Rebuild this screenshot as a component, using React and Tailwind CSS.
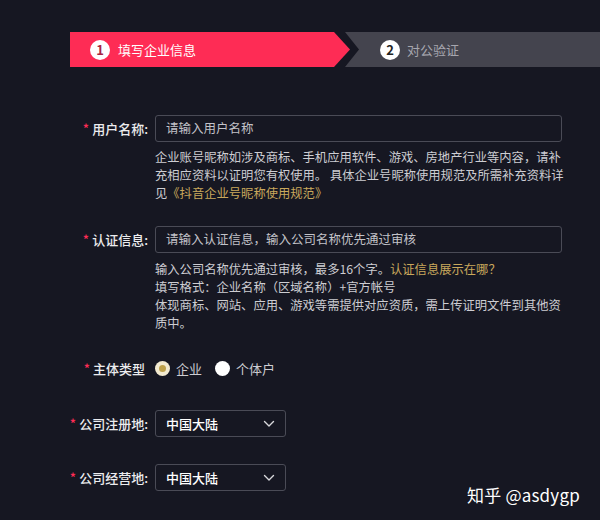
const font = { fontFamily: '"Noto Sans CJK SC", "Noto Sans", sans-serif' };

// Required-field label, right aligned into the label column
const Label = ({ children }) => (
  <div className="w-[148px] shrink-0 h-[27px] flex items-center justify-end text-[13px] text-[#ececee] font-medium">
    <span className="text-[#fe2c55] text-[13px] mr-[3px]">*</span>
    {children}
  </div>
);

const Chevron = () => (
  <svg width="12" height="8" viewBox="0 0 12 8" fill="none">
    <path d="M1.5 1.5 L6 6 L10.5 1.5" stroke="#d8d8dc" strokeWidth="1.4" strokeLinecap="round" strokeLinejoin="round" />
  </svg>
);

const Select = ({ value }) => (
  <div className="w-[131px] h-[27px] border border-[#4a4b56] rounded-[3px] flex items-center justify-between pl-[10px] pr-[10px]">
    <span className="text-[13px] text-white font-medium">{value}</span>
    <Chevron />
  </div>
);

export default function App() {
  return (
    <div className="relative w-full h-[520px] overflow-hidden bg-[#161722]" style={font}>
      {/* steps */}
      <div className="pt-[32px] pl-[70px] flex h-[67px]">
        <div className="w-[262px] h-[35px] bg-[#fe2c55] flex items-center pl-[20px] gap-[8px]">
          <span className="w-[20px] h-[20px] rounded-full bg-white flex items-center justify-center text-[13px] font-bold text-[#a82444]">1</span>
          <span className="text-[13px] text-white">填写企业信息</span>
        </div>
        <svg width="28" height="35" viewBox="0 0 28 35" className="shrink-0 block">
          <rect x="0" y="0" width="28" height="35" fill="#44444e" />
          <polygon points="0,0 13,0 27,17.5 13,35 0,35" fill="#161722" />
          <polygon points="0,0 2,0 18,17.5 2,35 0,35" fill="#fe2c55" />
        </svg>
        <div className="flex-1 h-[35px] bg-[#44444e] flex items-center pl-[20px] gap-[7px]">
          <span className="w-[20px] h-[20px] rounded-full bg-white flex items-center justify-center text-[13px] font-bold text-[#222]">2</span>
          <span className="text-[13px] text-[#a6a6ae]">对公验证</span>
        </div>
      </div>

      <div className="pt-[48px] flex flex-col">
        {/* username */}
        <div className="flex gap-[7px]">
          <Label>用户名称:</Label>
          <div className="flex flex-col">
            <div className="w-[407px] h-[27px] border border-[#4a4b56] rounded-[3px] flex items-center pl-[10px] text-[12.5px] text-[#c2c2c8]">
              请输入用户名称
            </div>
            <p className="mt-[6px] text-[12.3px] leading-[18px] text-[#cdcdd2] whitespace-nowrap">
              企业账号昵称如涉及商标、手机应用软件、游戏、房地产行业等内容，请补
              <br />
              充相应资料以证明您有权使用。 具体企业号昵称使用规范及所需补充资料详
              <br />
              见<span className="text-[#c9a85c]">《抖音企业号昵称使用规范》</span>
            </p>
          </div>
        </div>

        {/* certification */}
        <div className="flex gap-[7px] mt-[24px]">
          <Label>认证信息:</Label>
          <div className="flex flex-col">
            <div className="w-[407px] h-[27px] border border-[#4a4b56] rounded-[3px] flex items-center pl-[10px] text-[12.5px] text-[#c2c2c8]">
              请输入认证信息，输入公司名称优先通过审核
            </div>
            <p className="mt-[7px] text-[12.3px] leading-[18px] text-[#cdcdd2] whitespace-nowrap">
              输入公司名称优先通过审核，最多16个字。<span className="text-[#c9a85c]">认证信息展示在哪？</span>
              <br />
              填写格式：企业名称（区域名称）+官方帐号
              <br />
              体现商标、网站、应用、游戏等需提供对应资质，需上传证明文件到其他资
              <br />
              质中。
            </p>
          </div>
        </div>

        {/* entity type */}
        <div className="flex gap-[7px] mt-[23px] items-center">
          <div className="w-[148px] shrink-0 pr-[3px] flex items-center justify-end text-[13px] text-[#ececee] font-medium">
            <span className="text-[#fe2c55] text-[13px] mr-[3px]">*</span>
            主体类型
          </div>
          <div className="flex items-center h-[27px]">
            <span className="w-[15px] h-[15px] rounded-full bg-[#f2ead0] flex items-center justify-center">
              <span className="w-[7px] h-[7px] rounded-full bg-[#bea14a]" />
            </span>
            <span className="ml-[6px] text-[13px] text-[#cdcdd2]">企业</span>
            <span className="ml-[13px] w-[15px] h-[15px] rounded-full bg-white" />
            <span className="ml-[6px] text-[13px] text-[#cdcdd2]">个体户</span>
          </div>
        </div>

        {/* registered place */}
        <div className="flex gap-[7px] mt-[28px]">
          <Label>公司注册地:</Label>
          <Select value="中国大陆" />
        </div>

        {/* business place */}
        <div className="flex gap-[7px] mt-[27px]">
          <Label>公司经营地:</Label>
          <Select value="中国大陆" />
        </div>
      </div>

      {/* watermark */}
      <div className="absolute left-[467px] top-[482px] text-[17px] text-white tracking-[0.2px]">知乎 @asdygp</div>
    </div>
  );
}
